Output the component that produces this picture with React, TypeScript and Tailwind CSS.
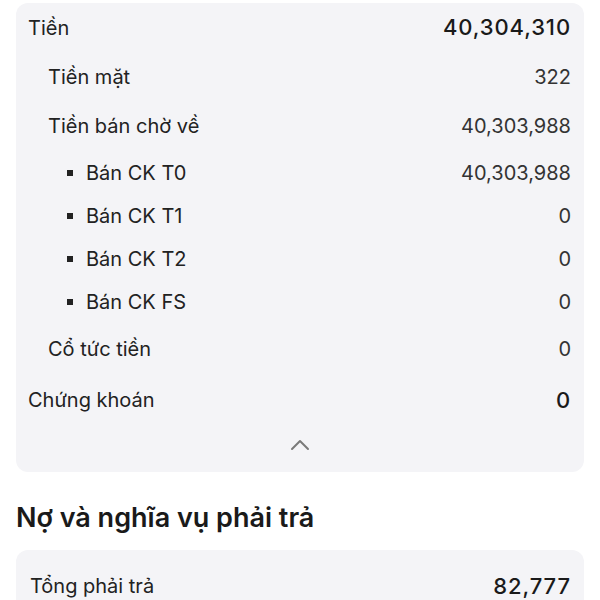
import React from "react";

type Row = { label: string; value: string; level: 0 | 1 | 2; bold?: boolean; h: string };

const rows: Row[] = [
  { label: "Tiền", value: "40,304,310", level: 0, bold: true, h: "h-[49px]" },
  { label: "Tiền mặt", value: "322", level: 1, h: "h-[49px]" },
  { label: "Tiền bán chờ về", value: "40,303,988", level: 1, h: "h-[50px]" },
  { label: "Bán CK T0", value: "40,303,988", level: 2, h: "h-[43px]" },
  { label: "Bán CK T1", value: "0", level: 2, h: "h-[43px]" },
  { label: "Bán CK T2", value: "0", level: 2, h: "h-[43px]" },
  { label: "Bán CK FS", value: "0", level: 2, h: "h-[43px]" },
  { label: "Cổ tức tiền", value: "0", level: 1, h: "h-[52px]" },
  { label: "Chứng khoán", value: "0", level: 0, bold: true, h: "h-[50px]" },
];

export default function App() {
  return (
    <div
      className="w-[600px] h-[600px] overflow-hidden bg-white pt-[3px] px-4 text-[#222]"
      style={{ fontFamily: "Inter, 'Noto Sans', sans-serif" }}
    >
      <div className="rounded-[12px] bg-[#f4f4f7] pl-3 pr-[13px]">
        {rows.map((r) => (
          <div key={r.label} className={`flex items-center justify-between ${r.h}`}>
            <div
              className={
                r.level === 0
                  ? "flex items-center text-[20px]"
                  : r.level === 1
                  ? "flex items-center pl-5 text-[20px]"
                  : "flex items-center pl-[39px] text-[20px]"
              }
            >
              {r.level === 2 && <span className="mr-[13px] inline-block h-[6px] w-[6px] bg-[#222]" />}
              <span>{r.label}</span>
            </div>
            <span
              className={
                r.bold
                  ? "text-[22px] font-medium tracking-[0.9px] text-[#1a1a1a]"
                  : "text-[20px] text-[#333]"
              }
            >
              {r.value}
            </span>
          </div>
        ))}
        <div className="flex h-[47px] justify-center pt-[13px]">
          <svg width="20" height="13" viewBox="0 0 20 13" fill="none">
            <polyline points="2,11 10,3 18,11" stroke="#7a7a7a" strokeWidth="2" strokeLinecap="round" strokeLinejoin="round" />
          </svg>
        </div>
      </div>
      <h2 className="mt-[29px] text-[27px] font-semibold leading-[34px] text-[#1a1a1a]">Nợ và nghĩa vụ phải trả</h2>
      <div className="mt-[15px] rounded-t-[12px] bg-[#f4f4f7] pl-[14px] pr-[13px]">
        <div className="flex h-[72px] items-center justify-between">
          <span className="text-[20px]">Tổng phải trả</span>
          <span className="text-[22px] font-medium tracking-[0.9px] text-[#1a1a1a]">82,777</span>
        </div>
      </div>
    </div>
  );
}
